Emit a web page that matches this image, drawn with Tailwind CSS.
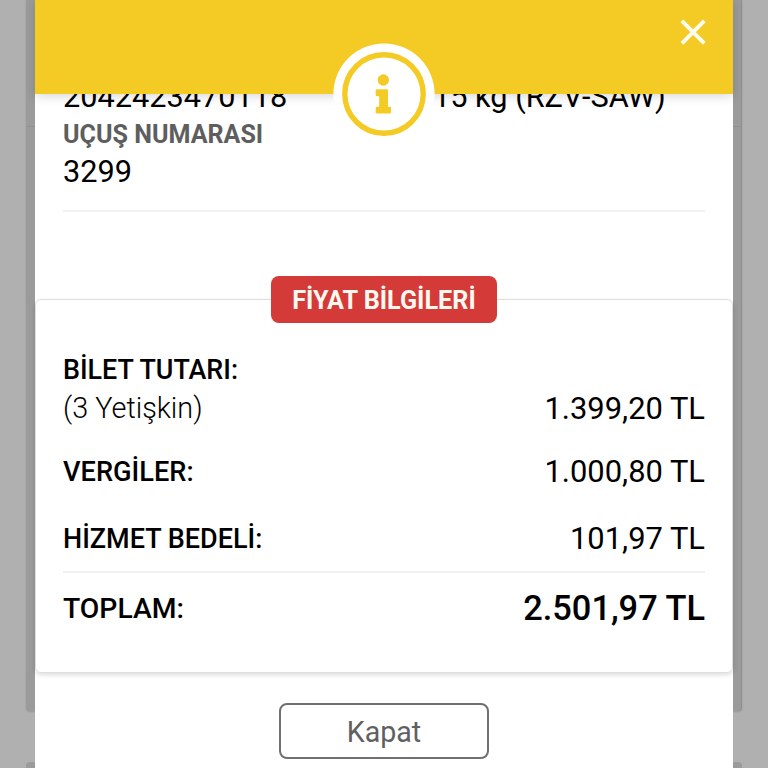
<!DOCTYPE html>
<html lang="tr">
<head>
  <meta charset="UTF-8">
  <meta name="viewport" content="width=device-width, initial-scale=1.0">
  <title>Fiyat Bilgileri</title>
  <script src="https://cdn.jsdelivr.net/npm/@tailwindcss/browser@4"></script>
</head>
<body class="relative h-screen overflow-hidden bg-[#b0b0b0] font-['Roboto',sans-serif] text-black">

<!-- Dimmed page behind the modal -->
<div class="absolute inset-y-0 left-[26px] w-[716px]">
  <div class="relative h-[711px] rounded-b-sm border-r border-[#8f8f8f] bg-[#9b9b9b] shadow-[0_1px_2px_#999999]">
    <div class="absolute left-0 top-[107px] h-5 w-full rounded-t border-b border-[#939393]"></div>
  </div>
  <div class="mt-[51px] h-10 rounded-t-sm bg-[#9b9b9b]"></div>
</div>

<!-- Modal -->
<div class="relative mx-auto flex h-full w-[698px] flex-col bg-white">
  <header class="relative z-10 h-[94px] shrink-0 bg-[#f4cb24] shadow-[0_2px_10px_rgba(0,0,0,0.16)]">
    <button class="absolute right-[26px] top-[18px]" aria-label="Kapat">
      <svg class="size-7" viewBox="0 0 28 28" fill="none" stroke="#fffdf0" stroke-width="3.9"><path d="M2.9 2.9 25.3 25.3M25.3 2.9 2.9 25.3"/></svg>
    </button>
  </header>
  <svg class="absolute left-[298px] top-[43px] z-20 size-[102px]" viewBox="0 0 102 102">
    <circle cx="51" cy="51" r="50.6" fill="#fff"/>
    <circle cx="51" cy="51" r="39.2" fill="none" stroke="#f4cb24" stroke-width="5.4"/>
    <g fill="#f4cb24">
      <circle cx="50.3" cy="37" r="5.7"/>
      <path d="M44 46.2h9.7q1.3 0 1.3 1.3v16.2h1.7q1.3 0 1.3 1.3v4.2q0 1.3-1.3 1.3H44q-1.3 0-1.3-1.3V65q0-1.3 1.3-1.3h2.2V53.3H44q-1.3 0-1.3-1.3v-4.5q0-1.3 1.3-1.3z"/>
    </g>
  </svg>

  <main class="grow">
    <!-- Flight details -->
    <section class="mx-7 -mt-4 h-[134px] border-b-2 border-[#f1f1f1]">
      <div class="flex text-[30.7px] leading-[38px]">
        <p class="w-[370px]">2042423470118</p>
        <p class="whitespace-nowrap">15 kg (RZV-SAW)</p>
      </div>
      <h3 class="text-[25.1px] leading-[38px] font-bold text-[#5e5e5e]">UÇUŞ NUMARASI</h3>
      <p class="text-[30.7px] leading-9">3299</p>
    </section>

    <!-- Price details -->
    <section class="mt-[87px] h-[374px] rounded-md border border-[#dedede] px-[27px] shadow-[0_2px_5px_rgba(0,0,0,0.14)]">
      <h2 class="mx-auto -mt-6 h-[47px] w-[226px] rounded-lg bg-[#d33a38] text-center text-[25.2px] leading-[50px] font-bold text-[#fff8f0]">FİYAT BİLGİLERİ</h2>
      <div class="mt-7 flex items-end justify-between">
        <div>
          <h3 class="text-[26.9px] leading-[39px] font-medium">BİLET TUTARI:</h3>
          <p class="-mt-px mb-px text-[28.8px] leading-[38px] font-light">(3 Yetişkin)</p>
        </div>
        <p class="text-[30.9px] leading-[38px]">1.399,20 TL</p>
      </div>
      <div class="mt-[25px] flex justify-between leading-[38px]">
        <h3 class="text-[27.2px] font-medium">VERGİLER:</h3>
        <p class="text-[30.9px]">1.000,80 TL</p>
      </div>
      <div class="mt-[29px] flex h-[53px] justify-between border-b-2 border-[#f1f1f1] leading-[38px]">
        <h3 class="text-[27px] font-medium">HİZMET BEDELİ:</h3>
        <p class="text-[30.9px]">101,97 TL</p>
      </div>
      <div class="mt-4 flex justify-between leading-[38px]">
        <h3 class="pt-px text-[28.3px] font-medium">TOPLAM:</h3>
        <p class="text-[34.4px] font-medium">2.501,97 TL</p>
      </div>
    </section>

    <button class="mx-auto mt-[30px] block h-14 w-[210px] rounded-lg border-2 border-[#707070] pt-0.5 text-[28.6px] text-[#606060]">Kapat</button>
  </main>
</div>

</body>
</html>
